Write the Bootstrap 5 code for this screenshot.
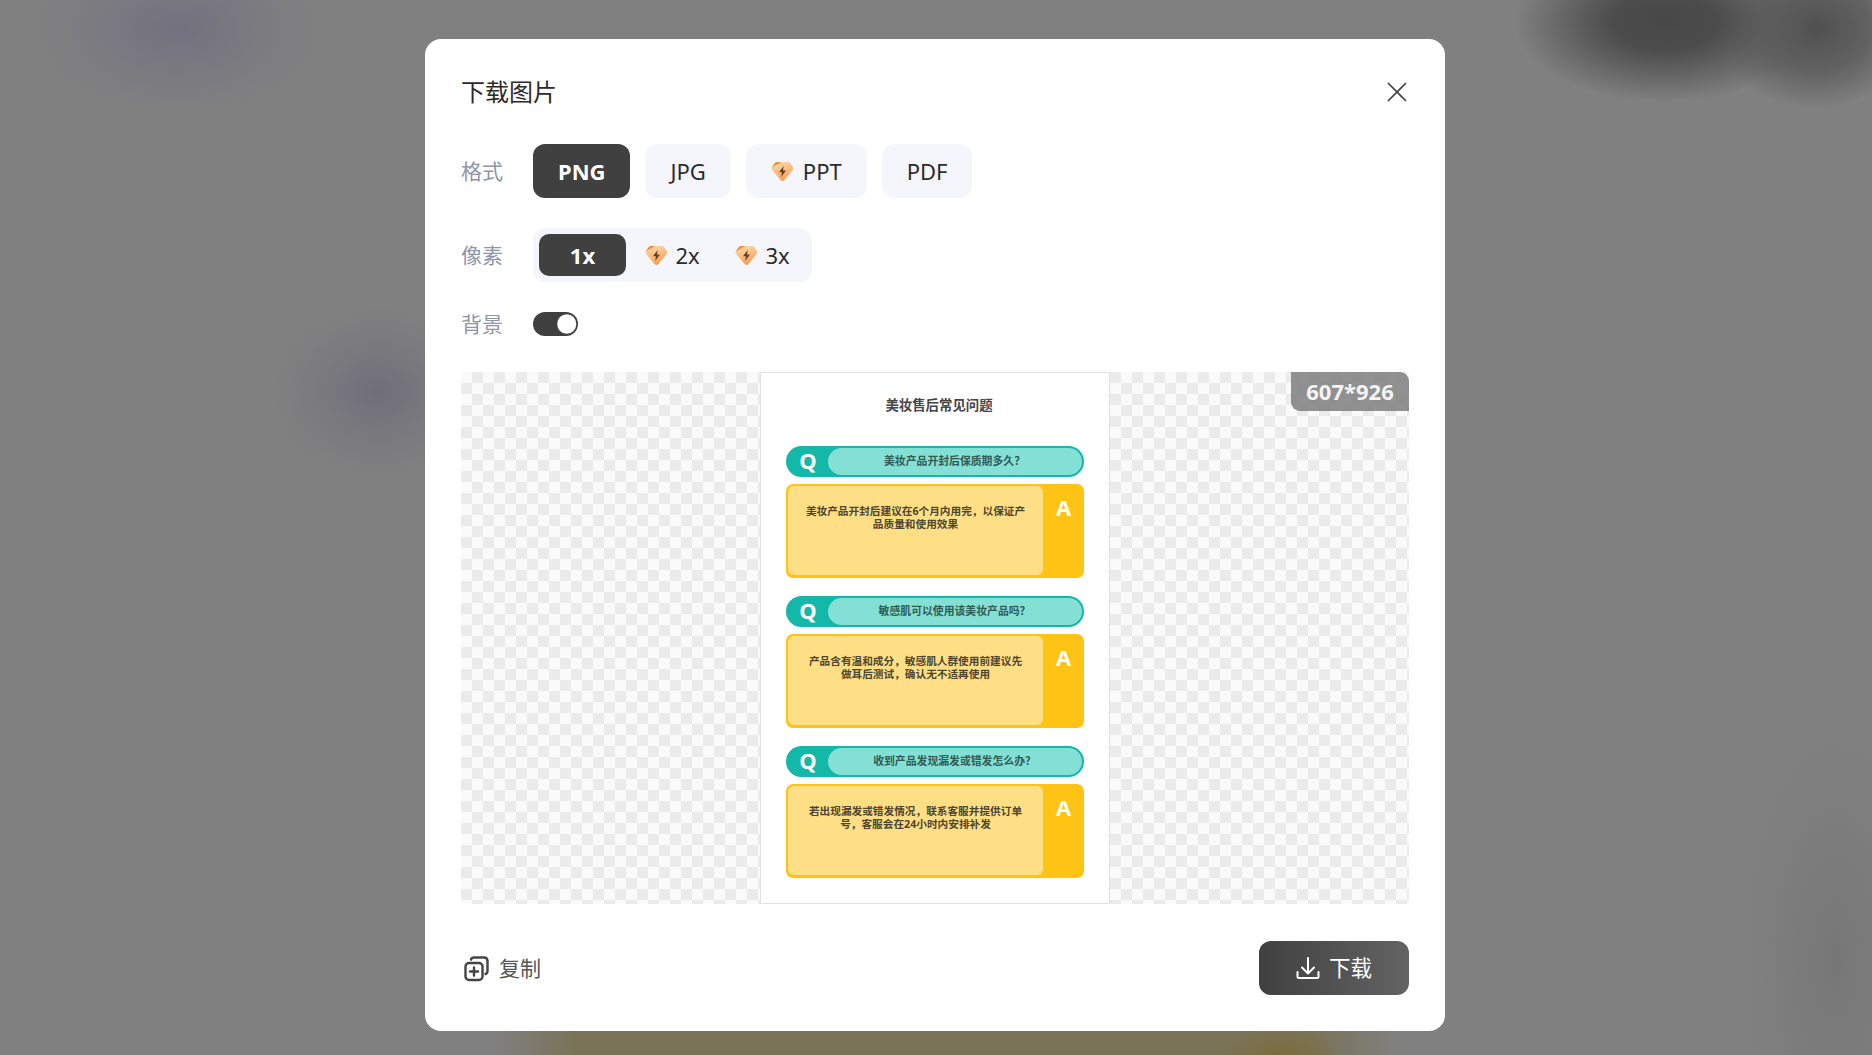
<!DOCTYPE html>
<html lang="zh-CN">
<head>
    <meta charset="UTF-8">
    <meta name="viewport" content="width=device-width, initial-scale=1.0">
    <title>下载图片</title>
    <link href="https://cdn.jsdelivr.net/npm/bootstrap@5.3.0/dist/css/bootstrap.min.css" rel="stylesheet">
    <script src="https://cdn.jsdelivr.net/npm/bootstrap@5.3.0/dist/js/bootstrap.bundle.min.js"></script>
    <style>
        html, body { height: 100%; }
        body {
            overflow: hidden;
            font-family: "Noto Sans", "Noto Sans CJK SC", sans-serif;
            background-color: #808080;
            background-image:
                radial-gradient(ellipse 150px 80px at 1665px 22px, #484848 0, #4c4c4c 35%, rgba(90,90,90,.75) 65%, rgba(128,128,128,0) 100%),
                radial-gradient(ellipse 100px 80px at 1815px 28px, #505050 0, rgba(85,85,85,.7) 55%, rgba(128,128,128,0) 100%),
                radial-gradient(ellipse 140px 85px at 178px 28px, rgba(114,112,127,.95) 0, rgba(118,116,128,.55) 50%, rgba(128,128,128,0) 100%),
                radial-gradient(ellipse 105px 85px at 378px 392px, rgba(108,106,120,.8) 0, rgba(114,112,124,.4) 55%, rgba(128,128,128,0) 100%),
                radial-gradient(ellipse 90px 220px at 1835px 960px, #777 0, rgba(128,128,128,0) 100%),
                radial-gradient(ellipse 60px 30px at 1280px 26px, #7c6c3c 0, rgba(124,108,60,0) 100%),
                linear-gradient(90deg, rgba(122,115,87,0) 490px, #7a7357 580px, #7a7357 1310px, rgba(122,115,87,0) 1400px);
            background-repeat: no-repeat;
            background-size: auto, auto, auto, auto, auto, 100% 24px, 100% 24px;
            background-position: 0 0, 0 0, 0 0, 0 0, 0 0, 0 100%, 0 100%;
        }
        .modal-dialog.dl-dialog { max-width: 1020px; width: 1020px; margin: 39px 0 0 425px; }
        .dl-panel { height: 992px; padding: 36px; border: 0; border-radius: 16px; background: #fff; }
        .dl-head { margin-bottom: 33px; }
        .dl-title { font-size: 24px; line-height: 34px; height: 36px; color: #2b2b2b; }
        .dl-close { width: 20px; height: 20px; margin: 0 2px 2px 0; }
        .opt-label { width: 72px; padding-top: 2px; font-size: 21px; color: #8e96a8; flex: none; }
        .opt-row { height: 54px; }
        .opt-row-next { margin-top: 30px; }
        .opt-list { gap: 15px; }
        .opt-btn {
            height: 54px; padding: 0 25px; border: 0; border-radius: 12px;
            font-size: 22px; line-height: 1; color: #2b2b2b; background: #f4f6fc;
        }
        .opt-on, .opt-on:hover { background: #404040; color: #fff; font-weight: 700; }
        .gem-gap { gap: 9px; }
        .gem { width: 23px; height: 21px; flex: none; }
        .seg-box { height: 54px; padding: 6px; gap: 3px; border-radius: 12px; background: #f4f6fc; }
        .seg-btn { width: 87px; height: 42px; padding: 0; border: 0; border-radius: 10px; font-size: 22px; line-height: 1; color: #2b2b2b; background: transparent; }
        .seg-btn.opt-on { background: #404040; color: #fff; }
        .seg-gem { gap: 7px; }
        .switch-row { margin-top: 30px; height: 24px; }
        .form-switch.bg-switch { padding: 0; margin: 0; min-height: 0; display: flex; }
        .form-switch.bg-switch .form-check-input {
            width: 45px; height: 24px; margin: 0; border: 0; border-radius: 12px;
            background-color: #404040; background-position: right -1.5px center; background-size: 26px 26px;
        }
        .preview-box {
            height: 532px; margin-top: 36px; overflow: hidden;
            background: repeating-conic-gradient(#ebebeb 0 25%, #fafafa 0 50%) 0 0 / 22px 22px;
        }
        .size-tag {
            top: 0; right: 0; width: 118px; height: 39px;
            border-radius: 0 9px 0 9px; background: rgba(122,122,122,.82);
            color: #f4f4f4; font-size: 22px; font-weight: 700; line-height: 39px; text-align: center;
        }
        .sheet {
            width: 350px; height: 532px; padding: 22px 25px 0; background: #fff;
            border: 1px solid #e2e2e2;
        }
        .sheet-title { height: 20px; margin: 0 0 31px 8px; font-size: 13.4px; line-height: 20px; font-weight: 700; color: #464646; text-align: center; }
        .qa-item { width: 298px; margin-bottom: 18px; }
        .q-bar { height: 31px; padding: 2px; border-radius: 16px; background: #14b8a8; }
        .q-letter { width: 40px; flex: none; color: #fff; font-size: 22px; font-weight: 700; line-height: 25px; text-align: center; }
        .q-text { padding-right: 1px; border-radius: 14px; background: #84e0d4; color: #2f5c56; font-size: 10.85px; font-weight: 700; line-height: 26px; text-align: center; }
        .a-box { height: 94px; margin-top: 7px; padding: 2px 0 3px 2px; border-radius: 7px; background: #ffc315; }
        .a-text { width: 255px; padding: 19px 10px 0; border-radius: 6px; background: #ffdf85; color: #4e4630; font-size: 10.67px; font-weight: 700; line-height: 12.5px; text-align: center; }
        .a-letter { color: #fff; font-size: 22px; font-weight: 700; line-height: 42px; text-align: center; }
        .dl-foot { margin-top: 37px; }
        .copy-btn { padding: 0 0 0 2px; gap: 9px; border: 0; background: transparent; color: #555; font-size: 21px; line-height: 1; }
        .save-btn {
            width: 150px; height: 54px; padding: 0; gap: 9px; border: 0; border-radius: 12px;
            background: linear-gradient(90deg, #404040, #636363); color: #fff; font-size: 21.5px; line-height: 1;
        }
        .save-btn:hover { color: #fff; }
    </style>
</head>
<body>
<svg width="0" height="0" class="d-block">
    <defs>
        <linearGradient id="gemFill" x1="0.2" y1="0" x2="0.6" y2="1">
            <stop offset="0" stop-color="#fcdcb0"/>
            <stop offset="1" stop-color="#f49d52"/>
        </linearGradient>
        <symbol id="gemIcon" viewBox="0 0 20 21" preserveAspectRatio="none">
            <path d="M5.2 1h9.6c.8 0 1.400.400 1.800 1l2.600 4.400c.500.800.400 1.700-.200 2.400L11.500 19.300c-.800.900-2.200.900-3 0L.9 8.800C.3 8.100.2 7.200.7 6.400L3.400 2c.4-.6 1-1 1.800-1z" fill="url(#gemFill)"/>
            <path d="M5.200 1h3.800L.7 6.400 3.400 2c.4-.6 1-1 1.800-1z" fill="#f08a3c"/>
            <path d="M11 5 7 11.200h2.500l-.6 4.800 4.100-6.500h-2.600z" fill="#6b3d1e"/>
        </symbol>
    </defs>
</svg>

<div class="modal d-block" tabindex="-1">
    <div class="modal-dialog dl-dialog">
        <div class="modal-content dl-panel">
            <div class="dl-head d-flex justify-content-between align-items-center">
                <div class="dl-title">下载图片</div>
                <svg class="dl-close" viewBox="0 0 20 20" fill="none" stroke="#444" stroke-width="1.7"><path d="M1 1 19 19M19 1 1 19"/></svg>
            </div>

            <div class="d-flex align-items-center opt-row">
                <div class="opt-label">格式</div>
                <div class="d-flex opt-list">
                    <button class="btn opt-btn opt-on">PNG</button>
                    <button class="btn opt-btn">JPG</button>
                    <button class="btn opt-btn d-flex align-items-center gem-gap"><svg class="gem"><use href="#gemIcon"/></svg>PPT</button>
                    <button class="btn opt-btn">PDF</button>
                </div>
            </div>

            <div class="d-flex align-items-center opt-row opt-row-next">
                <div class="opt-label">像素</div>
                <div class="d-flex align-items-center seg-box">
                    <button class="btn seg-btn opt-on">1x</button>
                    <button class="btn seg-btn d-flex align-items-center justify-content-center seg-gem"><svg class="gem"><use href="#gemIcon"/></svg>2x</button>
                    <button class="btn seg-btn d-flex align-items-center justify-content-center seg-gem"><svg class="gem"><use href="#gemIcon"/></svg>3x</button>
                </div>
            </div>

            <div class="d-flex align-items-center switch-row">
                <div class="opt-label">背景</div>
                <div class="form-check form-switch bg-switch">
                    <input class="form-check-input" type="checkbox" role="switch" checked aria-label="背景">
                </div>
            </div>

            <div class="preview-box position-relative d-flex justify-content-center">
                <div class="sheet">
                    <div class="sheet-title">美妆售后常见问题</div>

                    <div class="qa-item">
                        <div class="q-bar d-flex">
                            <div class="q-letter">Q</div>
                            <div class="q-text flex-grow-1">美妆产品开封后保质期多久？</div>
                        </div>
                        <div class="a-box d-flex">
                            <div class="a-text">美妆产品开封后建议在6个月内用完，以保证产<br>品质量和使用效果</div>
                            <div class="a-letter flex-grow-1">A</div>
                        </div>
                    </div>

                    <div class="qa-item">
                        <div class="q-bar d-flex">
                            <div class="q-letter">Q</div>
                            <div class="q-text flex-grow-1">敏感肌可以使用该美妆产品吗？</div>
                        </div>
                        <div class="a-box d-flex">
                            <div class="a-text">产品含有温和成分，敏感肌人群使用前建议先<br>做耳后测试，确认无不适再使用</div>
                            <div class="a-letter flex-grow-1">A</div>
                        </div>
                    </div>

                    <div class="qa-item">
                        <div class="q-bar d-flex">
                            <div class="q-letter">Q</div>
                            <div class="q-text flex-grow-1">收到产品发现漏发或错发怎么办？</div>
                        </div>
                        <div class="a-box d-flex">
                            <div class="a-text">若出现漏发或错发情况，联系客服并提供订单<br>号，客服会在24小时内安排补发</div>
                            <div class="a-letter flex-grow-1">A</div>
                        </div>
                    </div>
                </div>
                <div class="size-tag position-absolute">607*926</div>
            </div>

            <div class="dl-foot d-flex justify-content-between align-items-center">
                <button class="btn copy-btn d-flex align-items-center">
                    <svg width="27" height="27" viewBox="0 0 27 27" fill="none" stroke="#444" stroke-width="2.4" stroke-linecap="round">
                        <rect x="2.5" y="8" width="17" height="17" rx="3.5"/>
                        <path d="M8 4.500C8.500 3 9.500 2.500 11 2.500h10c2 0 3.500 1.500 3.500 3.500v10c0 1.500-.5 2.500-2 3"/>
                        <path d="M11 12.500v8M7 16.500h8"/>
                    </svg>
                    复制
                </button>
                <button class="btn save-btn d-flex align-items-center justify-content-center">
                    <svg width="24" height="24" viewBox="0 0 24 24" fill="none" stroke="#fff" stroke-width="2" stroke-linecap="round" stroke-linejoin="round">
                        <path d="M12 2v15M6 11.500l6 6 6-6"/>
                        <path d="M1.500 16v4.500c0 1 .5 1.500 1.500 1.500h18c1 0 1.500-.5 1.500-1.500V16"/>
                    </svg>
                    下载
                </button>
            </div>
        </div>
    </div>
</div>
</body>
</html>
